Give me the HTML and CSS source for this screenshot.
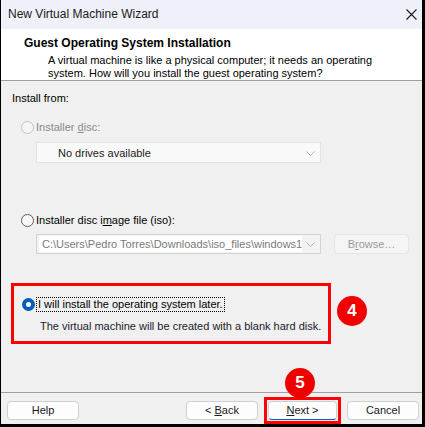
FILE: index.html
```html
<!DOCTYPE html>
<html lang="en">
<head>
<meta charset="utf-8">
<title>New Virtual Machine Wizard</title>
<link rel="stylesheet" href="styles.css">
</head>
<body>
<div class="window">
  <div class="titlebar">
    <span class="title">New Virtual Machine Wizard</span>
    <svg class="close" width="11" height="11" viewBox="0 0 11 11" aria-hidden="true">
      <path d="M0.5 0.5 L10.5 10.5 M10.5 0.5 L0.5 10.5" stroke="#1a1a1a" stroke-width="1.1" fill="none"/>
    </svg>
  </div>
  <div class="header">
    <div class="h-title">Guest Operating System Installation</div>
    <div class="h-desc">A virtual machine is like a physical computer; it needs an operating system. How will you install the guest operating system?</div>
  </div>
  <div class="main">
    <div class="label">Install from:</div>
    <div class="option disabled opt-disc">
      <span class="radio"></span>
      <span>Installer <u>d</u>isc:</span>
    </div>
    <div class="combo combo-disc">
      <span class="combo-text">No drives available</span>
      <svg class="chev" width="9" height="5" viewBox="0 0 9 5"><path d="M0.5 0.5 L4.5 4.5 L8.5 0.5" stroke="#b5b5b5" fill="none"/></svg>
    </div>
    <div class="option opt-iso">
      <span class="radio"></span>
      <span>Installer disc i<u>m</u>age file (iso):</span>
    </div>
    <div class="iso-row">
      <div class="combo combo-iso">
        <span class="iso-field">C:\Users\Pedro Torres\Downloads\iso_files\windows10</span>
        <svg class="chev" width="9" height="5" viewBox="0 0 9 5"><path d="M0.5 0.5 L4.5 4.5 L8.5 0.5" stroke="#b5b5b5" fill="none"/></svg>
      </div>
      <div class="btn btn-disabled"><span>B<u>r</u>owse…</span></div>
    </div>
    <div class="later">
      <div class="option">
        <span class="radio checked"></span>
        <span class="focus">I will install the operating system later.</span>
      </div>
      <div class="later-note">The virtual machine will be created with a blank hard disk.</div>
    </div>
  </div>
  <div class="footer">
    <div class="btn"><span>Help</span></div>
    <div class="btn-group">
      <div class="btn"><span>&lt; <u>B</u>ack</span></div>
      <div class="btn btn-default"><span><u>N</u>ext &gt;</span></div>
      <div class="btn"><span>Cancel</span></div>
    </div>
  </div>
  <div class="badge badge-4">4</div>
  <div class="badge badge-5">5</div>
</div>
</body>
</html>
```

FILE: styles.css
```css
* { box-sizing: border-box; }
html, body { margin: 0; padding: 0; background: #000; }
body { width: 425px; height: 427px; overflow: hidden; }

.window {
  position: relative;
  width: 425px;
  height: 427px;
  border-left: 1px solid #000;
  border-right: 3px solid #000;
  border-bottom: 3px solid #000;
  background: #f0f0f0;
  display: flex;
  flex-direction: column;
  font-family: "Liberation Sans", Arial, sans-serif;
  font-size: 11px;
  line-height: 13px;
  color: #000;
}

.titlebar {
  height: 29px;
  background: #eef1f9;
  display: flex;
  align-items: center;
  justify-content: space-between;
  padding: 0 5px 1px 7px;
  flex: none;
}
.title { font-size: 12px; line-height: 16px; color: #1a1a1a; }
.close { display: block; margin-top: 1px; }

.header {
  height: 52px;
  flex: none;
  background: #fff;
  border-bottom: 1px solid #a0a0a0;
  padding: 6px 0 0 23px;
}
.h-title { font-weight: bold; font-size: 12px; line-height: 16px; }
.h-desc { margin: 3px 0 0 24px; width: 330px; line-height: 13px; }

.main {
  flex: 1;
  padding: 11px 0 0 11px;
}
.label { line-height: 13px; }

.option {
  display: flex;
  align-items: center;
  height: 13px;
  padding-left: 9px;
  gap: 2px;
}
.option.disabled { color: #8a8a8a; }
.opt-disc { margin-top: 16px; }
.opt-iso { margin-top: 51px; }

.radio {
  width: 13px;
  height: 13px;
  border-radius: 50%;
  border: 1px solid #5e5e5e;
  background: #f7f7f7;
  flex: none;
}
.disabled .radio { border-color: #c2c2c2; background: #f5f5f5; }
.radio.checked {
  border: 4px solid #005fb8;
  background: #fff;
}

.combo {
  position: relative;
  display: flex;
  align-items: center;
  border: 1px solid #e3e3e3;
  background: #f9f9f9;
}
.combo-disc {
  margin: 8px 0 0 24px;
  width: 285px;
  height: 21px;
  padding: 2px 0 0 21px;
  line-height: 17px;
}
.combo-text { flex: 1; color: #1a1a1a; }
.chev { position: absolute; right: 5px; top: 8px; }

.iso-row {
  display: flex;
  margin: 7px 0 0 24px;
  gap: 13px;
}
.combo-iso {
  width: 285px;
  height: 20px;
  border-color: #d4d4d4;
  background: #f2f2f2;
  padding: 2px 0 2px 2px;
}
.iso-field {
  width: 263px;
  height: 16px;
  background: #fff;
  color: #7a7a7a;
  padding: 2px 0 0 3px;
  line-height: 13px;
  white-space: nowrap;
  overflow: hidden;
}
.combo-iso .chev { top: 7px; }

.btn {
  position: relative;
  width: 72px;
  height: 19px;
  border: 1px solid #d0d0d0;
  border-radius: 4px;
  background: #fdfdfd;
  display: flex;
  align-items: center;
  justify-content: center;
  color: #1a1a1a;
  line-height: 13px;
}
.btn-disabled {
  width: 75px;
  height: 20px;
  color: #9a9a9a;
  background: #f5f5f5;
  border-color: #e6e6e6;
}

.later {
  margin: 32px 0 0 2px;
  width: 314px;
  height: 55px;
  outline: 3px solid #ff0000;
  padding: 12px 0 0 0;
}
.later .option { padding-left: 8px; }
.focus { outline: 1px dotted #000; outline-offset: 0; padding: 0 1px; }
.later-note { margin: 9px 0 0 26px; color: #1b1b2b; }

.footer {
  flex: none;
  height: 32px;
  border-top: 1px solid #a0a0a0;
  display: flex;
  justify-content: space-between;
  padding: 8px 3px 0 6px;
}
.btn-group { display: flex; gap: 10px; }
.btn-default {
  width: 69px;
  border-bottom: 1px solid #005fb8;
}
.btn-default::after {
  content: "";
  position: absolute;
  left: -5px;
  top: -5px;
  right: -5px;
  bottom: -5px;
  border: 3px solid #ff0000;
}

.badge {
  position: absolute;
  width: 30px;
  height: 30px;
  border-radius: 50%;
  background: #f00000;
  color: #fff;
  font-family: "Liberation Sans", Arial, sans-serif;
  font-weight: bold;
  font-size: 17px;
  line-height: 30px;
  text-align: center;
}
.badge-4 { left: 336px; top: 296px; }
.badge-5 { left: 284px; top: 368px; }
```
